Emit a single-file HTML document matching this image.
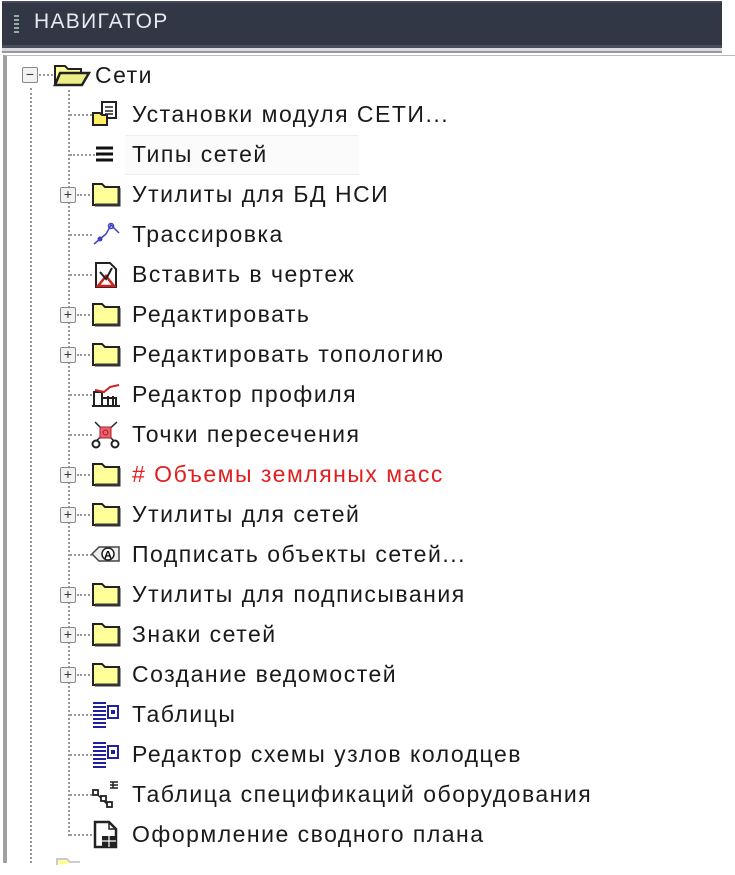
<!DOCTYPE html>
<html><head><meta charset="utf-8"><style>
html,body{margin:0;padding:0;background:#fff;width:735px;height:875px;overflow:hidden;font-family:"Liberation Sans",sans-serif;}
.hdr{position:absolute;left:2px;top:1px;width:720px;height:43px;background:#313744;border-top:2px solid #45495a;}
.hdr .t{position:absolute;left:32px;top:7px;color:#e8eaf0;font-size:21px;letter-spacing:1.3px}
.grip{position:absolute;left:12px;top:12px;width:5px;height:18px;background:repeating-linear-gradient(#9aa 0 2px,transparent 2px 4px);}
.l1{position:absolute;left:2px;top:45px;width:720px;height:3px;background:#4a4d5a}
.l2{position:absolute;left:2px;top:48px;width:720px;height:3px;background:#d8dae0}
.l3{position:absolute;left:2px;top:51px;width:720px;height:2px;background:#999}
.panel{position:absolute;left:3px;top:55px;width:732px;height:807px;border-left:4px solid #a0a0a0;border-top:1px solid #bbb;overflow:hidden;}
.row{position:absolute;font-size:23px;letter-spacing:1.5px;color:#1a1a1a;line-height:28px;white-space:nowrap}
.vd{position:absolute;width:0;border-left:2px dotted #999}
.hd{position:absolute;height:0;border-top:2px dotted #999}
.pb{position:absolute;width:14px;height:14px;border:1px solid #888;border-radius:2px;background:#f2f2f2;font-size:14px;line-height:13px;text-align:center;color:#333}
.ic{position:absolute}
</style></head><body>
<div class="hdr"><div class="grip"></div><div class="t">НАВИГАТОР</div></div>
<div class="l1"></div><div class="l2"></div><div class="l3"></div>
<div class="panel"></div>
<div class="vd" style="left:30px;top:88px;height:775px"></div>
<div class="vd" style="left:68px;top:90px;height:746px"></div>
<div class="pb" style="left:22px;top:67px">−</div>
<div class="hd" style="left:39px;top:74px;width:14px"></div>
<svg class="ic" style="left:53px;top:60px" width="38" height="28"><path d="M2 6h10l3 3h13v16H2z" fill="#ffff99" stroke="#222" stroke-width="2"/><path d="M7 13h29l-7 12H2z" fill="#eeee88" stroke="#222" stroke-width="2.5"/></svg>
<div class="row" style="left:95px;top:61px">Сети</div>
<div style="position:absolute;left:125px;top:135px;width:234px;height:38px;background:#fbfbfb;border-top:1px solid #eee;border-bottom:1px solid #eee"></div>
<div id="rows"></div>
<svg class="ic" style="left:55px;top:855px" width="40" height="10"><path d="M2 10V4h10l3 3h10" fill="#ffff99" stroke="#ccc" stroke-width="2"/></svg>
<script>
var items=[
["Установки модуля СЕТИ...","set",0],["Типы сетей","lines",0],["Утилиты для БД НСИ","folder",1],["Трассировка","trace",0],["Вставить в чертеж","ins",0],["Редактировать","folder",1],["Редактировать топологию","folder",1],["Редактор профиля","prof",0],["Точки пересечения","cross",0],["# Объемы земляных масс","folder",1,"#e02020"],["Утилиты для сетей","folder",1],["Подписать объекты сетей...","lab",0],["Утилиты для подписывания","folder",1],["Знаки сетей","folder",1],["Создание ведомостей","folder",1],["Таблицы","tab",0],["Редактор схемы узлов колодцев","tab",0],["Таблица спецификаций оборудования","spec",0],["Оформление сводного плана","doc",0]];
var ic={
folder:'<path d="M3 4h9l3 3h14v18H3z" fill="#ffff99" stroke="#222" stroke-width="2"/><path d="M29 8v17H5" fill="none" stroke="#333" stroke-width="3"/>',
set:'<rect x="12" y="2" width="14" height="16" fill="#fff" stroke="#222" stroke-width="2"/><path d="M15 7h8M15 11h8M15 14h8" stroke="#222" stroke-width="1.5"/><path d="M3 13h7l2 2h5v10H3z" fill="#ffee66" stroke="#222" stroke-width="2"/>',
lines:'<path d="M6 8h17M6 14h17M6 20h17" stroke="#111" stroke-width="3"/>',
trace:'<path d="M4 24l12-10M16 14l5-9 8 8" fill="none" stroke="#4040c0" stroke-width="1.5"/><circle cx="10" cy="19" r="2.5" fill="#4040c0"/><circle cx="21" cy="6" r="2.5" fill="none" stroke="#4040c0" stroke-width="1.5"/>',
ins:'<path d="M6 3h14l6 6v18H6z" fill="#fff" stroke="#222" stroke-width="2"/><path d="M8 26l8-10 8 10z" fill="none" stroke="#d02020" stroke-width="2.5"/><path d="M10 12l6 7 6-11" stroke="#222" fill="none" stroke-width="2"/>',
prof:'<path d="M2 26h28M4 26V12h8v14M13 18h13v8M18 16v10M23 16v10" stroke="#222" fill="none" stroke-width="2"/><path d="M5 10l9 2 6-5 9-2" stroke="#d02020" fill="none" stroke-width="2"/>',
cross:'<path d="M5 2l20 20M27 2L5 22" stroke="#222" stroke-width="1.5"/><rect x="10" y="7" width="11" height="11" fill="#f06070" stroke="#a02020"/><circle cx="15.5" cy="12.5" r="2.5" fill="none" stroke="#a02020"/><circle cx="6" cy="24" r="3.5" fill="#fff" stroke="#222" stroke-width="2"/><circle cx="25" cy="24" r="3.5" fill="#fff" stroke="#222" stroke-width="2"/>',
lab:'<path d="M2 14l7-7h20v14H9z" fill="#eee" stroke="#444" stroke-width="1.5"/><circle cx="18" cy="14" r="6" fill="#fff" stroke="#222" stroke-width="1.5"/><text x="14" y="18.5" font-size="11" font-weight="bold" font-family="Liberation Sans">A</text>',
tab:'<path d="M3 3h13M3 7h13M3 11h13M3 15h13M3 19h13M3 23h13M3 27h13" stroke="#2020a0" stroke-width="2"/><rect x="18" y="6" width="10" height="12" fill="#fff" stroke="#2020a0" stroke-width="2"/><rect x="21" y="10" width="4" height="4" fill="#2020a0"/>',
spec:'<path d="M6 13l7 7 6 6" stroke="#222" stroke-width="1.5"/><rect x="3" y="10" width="5" height="5" fill="#fff" stroke="#222" stroke-width="1.8"/><rect x="11" y="16" width="5" height="5" fill="#fff" stroke="#222" stroke-width="1.8"/><rect x="17" y="22" width="5" height="5" fill="#fff" stroke="#222" stroke-width="1.8"/><path d="M20 2h8M20 5h8M20 8h8M23 2v6" stroke="#222" stroke-width="1.5"/>',
doc:'<path d="M5 2h14l7 7v18H5z" fill="#fff" stroke="#222" stroke-width="2.5"/><path d="M19 2v7h7" fill="none" stroke="#222" stroke-width="1.5"/><rect x="12" y="16" width="14" height="11" fill="#222"/><path d="M12 21h14M19 16v11" stroke="#fff" stroke-width="1.2"/>'
};
var h='';
items.forEach(function(it,i){
 var cy=115+i*40;
 if(it[2]){h+='<div class="pb" style="left:60px;top:'+(cy-8)+'px">+</div><div class="hd" style="left:77px;top:'+(cy-1)+'px;width:13px"></div>';}
 else h+='<div class="hd" style="left:70px;top:'+(cy-1)+'px;width:'+(it[1]=='lines'?28:22)+'px"></div>';
 h+='<svg class="ic" style="left:90px;top:'+(cy-15)+'px" width="32" height="30">'+ic[it[1]]+'</svg>';
 h+='<div class="row" style="left:132px;top:'+(cy-15)+'px;'+(it[3]?'color:'+it[3]:'')+'">'+it[0]+'</div>';
});
document.getElementById('rows').innerHTML=h;
</script>
</body></html>
